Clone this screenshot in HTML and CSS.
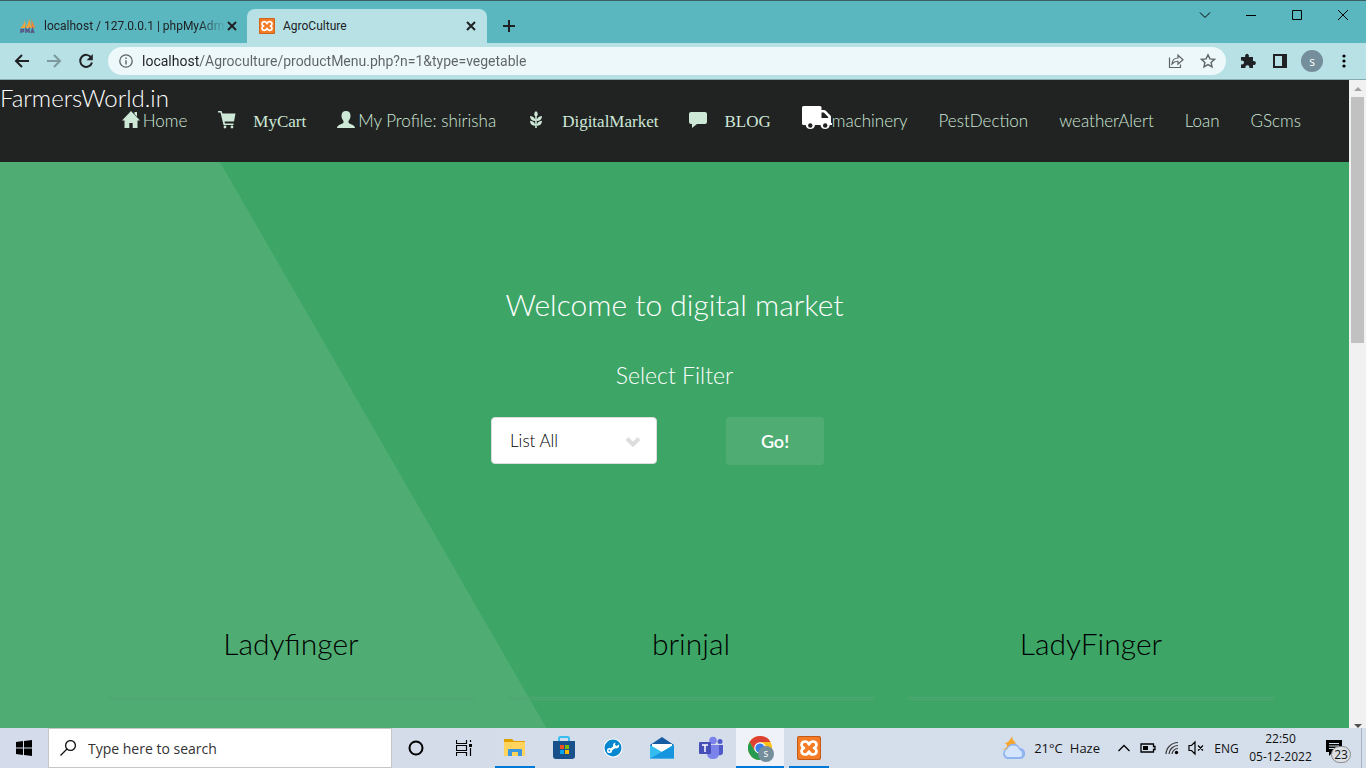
FILE: index.html
```html
<!DOCTYPE html>
<html lang="en">
<head>
  <meta charset="utf-8">
  <title>AgroCulture</title>
  <link rel="stylesheet" href="styles.css">
</head>
<body>
  <!-- browser tabs -->
  <div class="tabstrip">
    <div class="tab">
      <svg class="favicon" viewBox="0 0 16 16"><path d="M0 10Q4 7 5 2Q6 6 5 10zM5 10Q9 6 9 0Q11 6 11 10z" fill="#f0a43a"/><path d="M11 10Q12 6 11 1Q14 6 15 10z" fill="#e8873a"/><path d="M1 11v4M1 11.500h2.500v2H1M6 15v-4l1.500 2L9 11v4M11 15l1.500-4L14 15M11.500 14h2" fill="none" stroke="#555a86" stroke-width="1.500"/></svg>
      <span class="tab-title fade">localhost / 127.0.0.1 | phpMyAdm</span>
      <button class="tab-close" aria-label="Close tab"><svg viewBox="0 0 8 8"><path d="M0 0l8 8M8 0L0 8"/></svg></button>
    </div>
    <div class="tab active">
      <svg class="favicon" viewBox="0 0 24 24"><use href="#xampp"/></svg>
      <span class="tab-title">AgroCulture</span>
      <button class="tab-close" aria-label="Close tab"><svg viewBox="0 0 8 8"><path d="M0 0l8 8M8 0L0 8"/></svg></button>
    </div>
    <button class="new-tab" aria-label="New tab"><svg viewBox="0 0 12 12"><path d="M6 0v12M0 6h12"/></svg></button>
    <div class="window-buttons">
      <button aria-label="Search tabs"><svg viewBox="0 0 12 12"><path d="M1 3.500l5 5 5-5"/></svg></button>
      <button aria-label="Minimize"><svg viewBox="0 0 12 12"><path d="M1 6.500h10"/></svg></button>
      <button aria-label="Maximize"><svg viewBox="0 0 12 12"><path d="M1.500 1.500h9v9h-9z"/></svg></button>
      <button aria-label="Close"><svg viewBox="0 0 12 12"><path d="M1 1l10 10M11 1L1 11"/></svg></button>
    </div>
  </div>

  <!-- address bar -->
  <div class="toolbar">
    <button class="tool" aria-label="Back"><svg viewBox="0 0 16 16"><path d="M15 8H2M8 2L2 8l6 6" fill="none" stroke="#202124" stroke-width="2"/></svg></button>
    <button class="tool" aria-label="Forward"><svg viewBox="0 0 16 16"><path d="M1 8h13M8 2l6 6-6 6" fill="none" stroke="#7d999d" stroke-width="2"/></svg></button>
    <button class="tool" aria-label="Reload"><svg viewBox="0 0 16 16"><path d="M13.200 4.500A6 6 0 1 0 14 9.500" fill="none" stroke="#202124" stroke-width="2"/><path d="M14.800 1v6.200H8.600z" fill="#202124"/></svg></button>
    <div class="omnibox">
      <svg class="info" viewBox="0 0 14 14"><circle cx="7" cy="7" r="6.200" fill="none" stroke="#5f6368" stroke-width="1.300"/><path d="M6.300 6.200h1.400v4.300H6.300zM6.300 3.500h1.400v1.500H6.300z" fill="#5f6368"/></svg>
      <input class="url" type="text" aria-label="Address" value="localhost/Agroculture/productMenu.php?n=1&amp;type=vegetable">
      <button class="tool" aria-label="Share"><svg viewBox="0 0 16 16"><path d="M1.500 4.500v10h11v-3M4 11q.5-6 6-6V2.200l5 4.500-5 4.500V8.300Q6.500 8 4 11z" fill="none" stroke="#5f6368" stroke-width="1.200"/></svg></button>
      <button class="tool" aria-label="Bookmark"><svg viewBox="0 0 16 16"><path d="M8 1.800l1.900 4.100 4.500.5-3.300 3 .9 4.400L8 11.600l-4 2.200.9-4.400-3.300-3 4.500-.5z" fill="none" stroke="#5f6368" stroke-width="1.400"/></svg></button>
    </div>
    <button class="tool" aria-label="Extensions"><svg viewBox="0 0 16 16"><path d="M1 4h4.300a2 2 0 1 1 3.400 0H13v4.200a2 2 0 1 1 0 3.600V15H9.200a2 2 0 1 0-3.600 0H1v-3.800a2 2 0 1 0 0-3.400z" fill="#202124"/></svg></button>
    <button class="tool" aria-label="Side panel"><svg viewBox="0 0 16 16"><path d="M1 1h14v14H1zM3 3v10h7V3z" fill="#202124" fill-rule="evenodd"/></svg></button>
    <button class="avatar" aria-label="Profile">s</button>
    <button class="tool" aria-label="Menu"><svg viewBox="0 0 16 16"><circle cx="8" cy="3" r="1.600"/><circle cx="8" cy="8" r="1.600"/><circle cx="8" cy="13" r="1.600"/></svg></button>
  </div>

  <div class="viewport">
    <div class="page">
      <header class="header">
        <h1 class="logo"><a href="#">FarmersWorld.in</a></h1>
        <nav class="nav">
          <a href="#"><svg class="glyph" viewBox="0 0 18 18"><path d="M9 0l9 9.400h-2.500V17h-4.800v-5H7.300v5H2.500V9.400H0zM12.500 1H15v4.500l-2.500-2.500z"/></svg><span class="near">Home</span></a>
          <a href="#"><svg class="glyph" viewBox="0 0 18 18"><path d="M0 0h3.500l1 2.500H17.500L16 10.500H6.500l.5 2h8.500V14H5.500L2.500 1.500H0z"/><circle cx="7" cy="16" r="1.400"/><circle cx="14" cy="16" r="1.400"/></svg><span class="serif">MyCart</span></a>
          <a href="#"><svg class="glyph" viewBox="0 0 18 18"><path d="M9 0c3 0 4.500 2 4.500 4.800 0 2.500-1 4-2 5.200v1.500c0 1.500 6.500 2 6.500 5.500H0c0-3.500 6.500-4 6.500-5.500V10c-1-1.200-2-2.700-2-5.200C4.500 2 6 0 9 0z"/></svg><span class="near">My Profile: shirisha</span></a>
          <a href="#"><svg class="glyph" viewBox="0 0 18 18"><path d="M9 0q3.600 3.200 0 6.400q-3.600-3.200 0-6.400zM8.200 6h1.600v11H8.200zM8.500 10Q3 10 3 5q5 .5 5.500 5zM9.500 10q5.500 0 5.500-5-5 .5-5.500 5zM8.500 14.800Q3 14.800 3 9.800q5 .5 5.500 5zM9.500 14.800q5.500 0 5.500-5-5 .5-5.500 5z"/></svg><span class="serif">DigitalMarket</span></a>
          <a href="#"><svg class="glyph" viewBox="0 0 18 18"><path d="M2 1h14q2 0 2 2v8q0 2-2 2H8l-5 4V13H2q-2 0-2-2V3q0-2 2-2z"/></svg><span class="serif">BLOG</span></a>
          <a href="#"><svg class="truck" viewBox="0 0 30 24"><path d="M1.500 0H18q1.500 0 1.500 1.500V4H22q1 0 1.800.8l4.400 4.400q.8.800.8 1.800v6h1v2h-2.200a4.700 4.700 0 0 1-9.300 0H13a4.700 4.700 0 0 1-9.300 0H1.500Q0 19 0 17.500v-16Q0 0 1.500 0z"/><path d="M19.500 6.500h2.300l4.400 4.400v1h-6.700z" fill="#212322"/><circle cx="8.300" cy="19.500" r="2.200" fill="#212322"/><circle cx="23.200" cy="19.500" r="2.200" fill="#212322"/></svg><span>machinery</span></a>
          <a href="#">PestDection</a>
          <a href="#">weatherAlert</a>
          <a href="#">Loan</a>
          <a href="#">GScms</a>
        </nav>
      </header>

      <main class="market">
        <h2>Welcome to digital market</h2>
        <h3><label for="filter">Select Filter</label></h3>
        <form class="filter">
          <div class="select-wrapper">
            <select id="filter">
              <option>List All</option>
              <option>Fruit</option>
              <option>Vegetable</option>
              <option>Grains</option>
            </select>
            <svg class="arrow" viewBox="0 0 16 11"><path d="M2 2.500l6 6 6-6"/></svg>
          </div>
          <button class="go" type="submit">Go!</button>
        </form>
        <div class="products">
          <section class="product">Ladyfinger</section>
          <section class="product">brinjal</section>
          <section class="product">LadyFinger</section>
        </div>
      </main>
    </div>
    <div class="scrollbar">
      <svg viewBox="0 0 8 4"><path d="M0 4l4-4 4 4z" fill="#a3a3a3"/></svg>
      <div class="thumb"></div>
      <svg class="down" viewBox="0 0 8 4"><path d="M0 0l4 4 4-4z" fill="#505050"/></svg>
    </div>
  </div>

  <!-- windows taskbar -->
  <footer class="taskbar">
    <button class="task start" aria-label="Start"><svg viewBox="0 0 16 16"><path d="M0 2l7-1v6.500H0zM8 .9L16 0v7.500H8zM0 8.500h7V15l-7-1zM8 8.500h8V16l-8-.9z"/></svg></button>
    <label class="search">
      <svg viewBox="0 0 16 16"><circle cx="10.500" cy="5.500" r="4.900"/><path d="M7 9l-6.500 6.500"/></svg>
      <input type="text" placeholder="Type here to search" aria-label="Search">
    </label>
    <button class="task" aria-label="Cortana"><svg viewBox="0 0 16 16"><circle cx="8" cy="8" r="6.500" fill="none" stroke="#000" stroke-width="2"/></svg></button>
    <button class="task" aria-label="Task view"><svg viewBox="0 0 16 16"><path d="M.5 0v3.500h10V0M.5 5.500h10v5H.5zM.5 16v-3.500h10V16M14.500 0v2M14.500 8v8" fill="none" stroke="#000" stroke-width="1.200"/><path d="M13 4h3v3h-3z"/></svg></button>
    <div class="apps">
      <button class="task running" aria-label="File Explorer"><svg viewBox="0 0 24 24"><path d="M1 3h8l2 2h11v6H1z" fill="#dfa000"/><path d="M1 6h21v14H1z" fill="#ffd35c"/><path d="M5 20v-6q0-1 1-1h12q1 0 1 1v6h-4v-4H9v4z" fill="#3b96dc"/></svg></button>
      <button class="task" aria-label="Store"><svg viewBox="0 0 24 24"><path d="M7 6V2.500Q7 1 8.500 1h7Q17 1 17 2.500V6" fill="none" stroke="#38bdf0" stroke-width="2"/><path d="M1 5h22v15q0 3-3 3H4q-3 0-3-3z" fill="#18508b"/><path d="M8 9h4v4H8z" fill="#f25022"/><path d="M13 9h4v4h-4z" fill="#7fba00"/><path d="M8 14h4v4H8z" fill="#00a4ef"/><path d="M13 14h4v4h-4z" fill="#ffb900"/></svg></button>
      <button class="task" aria-label="Support"><svg viewBox="0 0 24 24"><circle cx="12" cy="12" r="9.500" fill="#fff"/><circle cx="12" cy="12" r="8.500" fill="#0787cf"/><path d="M9 14.500l5-4" stroke="#fff" stroke-width="2.500"/><circle cx="8.500" cy="14.500" r="1.800" fill="none" stroke="#fff" stroke-width="1.500"/><path d="M18 8.500l-2.500 1.500-1.500-1 .5-2.500a3 3 0 1 0 3.500 2z" fill="#fff"/></svg></button>
      <button class="task" aria-label="Mail"><svg viewBox="0 0 24 24"><path d="M0 9l12-8 12 8v13H0z" fill="#155ca3"/><path d="M2 8h20v8H2z" fill="#fff"/><path d="M0 9l12 7L24 8.500V22.500H0z" fill="#35bdf1"/><path d="M0 22.500L24 9v13.500z" fill="#1795df"/></svg></button>
      <button class="task" aria-label="Teams"><svg viewBox="0 0 24 24"><circle cx="14" cy="4.500" r="3.800" fill="#7b83eb"/><circle cx="21" cy="5.500" r="2.500" fill="#5059c9"/><path d="M18 9h6v7q0 4-5 3z" fill="#5059c9"/><path d="M8 9h12v8q0 6-6 6t-6-6z" fill="#7b83eb"/><rect y="6" width="12" height="12" rx="1" fill="#464eb8"/><path d="M3 9h6M6 9v7" stroke="#fff" stroke-width="1.500"/></svg></button>
      <button class="task current" aria-label="Chrome"><svg viewBox="0 0 24 24"><circle cx="12" cy="12" r="12" fill="#fbc116"/><path d="M1.600 6A12 12 0 0 1 22.400 6H12L7 15z" fill="#de4033"/><path d="M1.600 6A12 12 0 0 0 12 24l5.200-9H6.800z" fill="#249b50"/><circle cx="12" cy="12" r="5.800" fill="#fff"/><circle cx="12" cy="12" r="4.600" fill="#3b7ded"/></svg><span class="badge">s</span></button>
      <button class="task running" aria-label="XAMPP"><svg viewBox="0 0 24 24"><use href="#xampp"/></svg></button>
    </div>
    <div class="tray">
      <button class="weather"><svg viewBox="0 0 26 24"><path d="M11 0q0 4 4 7l-8 7-6-1q5 0 5-3T2 7q6 1 9-7z" fill="#f8a62b"/><path d="M6 23a5.500 5.500 0 0 1 0-10.500 7 7 0 0 1 13-.5A5.600 5.600 0 0 1 20 23z" fill="#8fb4ef"/><path d="M6 21a4.500 4.500 0 0 1 .5-8 6.500 6.500 0 0 1 12 1 4 4 0 0 1 1 7z" fill="#d3e4fc"/></svg><span>21°C</span><span>Haze</span></button>
      <button aria-label="Show hidden icons"><svg viewBox="0 0 16 16"><path d="M2.500 11L8 5.500l5.500 5.500" fill="none" stroke="#000" stroke-width="1.300"/></svg></button>
      <button aria-label="Battery"><svg viewBox="0 0 16 16"><path d="M1 4h12.500v2.500H15v3h-1.500V12H1z" fill="none" stroke="#000" stroke-width="1.300"/><path d="M3 6h5v4H3z"/></svg></button>
      <button aria-label="Network"><svg viewBox="0 0 16 16"><path d="M2 14A12 12 0 0 1 14 2.500M5 14a9 9 0 0 1 9-8.500M8 14a6 6 0 0 1 6-5.500" fill="none" stroke="#333" stroke-width="1.200"/><circle cx="12.500" cy="12.500" r="1.700"/></svg></button>
      <button aria-label="Volume"><svg viewBox="0 0 16 16"><path d="M1 5.500h2.500L7 2v12l-3.500-3.500H1zM10 5.500l5 5M15 5.500l-5 5" fill="none" stroke="#000" stroke-width="1.200"/></svg></button>
      <button class="lang">ENG</button>
      <button class="clock"><span>22:50</span><span>05-12-2022</span></button>
      <button class="notify" aria-label="Notifications"><svg viewBox="0 0 16 16"><path d="M0 0h16v12H7l-4 4v-4H0z"/><path d="M3 3.500h10M3 6h10M3 8.500h7" stroke="#d5dfee"/></svg><span class="count">23</span></button>
    </div>
  </footer>

  <svg class="defs" aria-hidden="true">
    <symbol id="xampp" viewBox="0 0 24 24">
      <rect width="24" height="24" rx="2" fill="#c55a16"/>
      <rect x="1" y="1" width="22" height="22" rx="2" fill="#f47c27"/>
      <path d="M12 8.500Q11 5.500 8 5.500T4.500 8.500Q4.500 11 7 12Q4.500 13 4.500 15.500Q5 18.500 8 18.500T12 15.500Q13 18.500 16 18.500T19.500 15.500Q19.500 13 17 12Q19.500 11 19.500 8.500Q19 5.500 16 5.500T12 8.500z" fill="none" stroke="#fff" stroke-width="2.600" stroke-linejoin="round"/>
    </symbol>
  </svg>
</body>
</html>
```

FILE: styles.css
```css
* {
  box-sizing: border-box;
}

body {
  display: flex;
  flex-direction: column;
  height: 100vh;
  margin: 0;
  overflow: hidden;
  font-family: "Open Sans", "Noto Sans", sans-serif;
  font-size: 12px;
  color: #202124;
}

button {
  display: flex;
  align-items: center;
  justify-content: center;
  flex: none;
  padding: 0;
  border: none;
  background: none;
  font: inherit;
  color: inherit;
}

svg {
  display: block;
  flex: none;
}

a {
  color: inherit;
  text-decoration: none;
}

.defs {
  position: absolute;
  width: 0;
  height: 0;
}

/* Browser tabs */
.tabstrip {
  display: flex;
  flex: none;
  height: 43px;
  padding: 8px 0 0 8px;
  background: #5ab7c0;
  border-top: 1px solid #3c5f64;
}

.tab {
  display: flex;
  align-items: center;
  width: 239px;
  padding: 0 11px 0 12px;
}

.tab.active {
  width: 240px;
  padding-right: 12px;
  background: #b7e1e5;
  border-radius: 8px 8px 0 0;
}

.favicon {
  width: 16px;
  height: 16px;
  margin-right: 8px;
}

.tab-title {
  flex: 1;
  font-family: Roboto, sans-serif;
  white-space: nowrap;
}

.fade {
  -webkit-mask-image: linear-gradient(to right, #000 85%, transparent);
  mask-image: linear-gradient(to right, #000 85%, transparent);
}

.tab-close {
  width: 8px;
  margin-left: 2px;
}

.tab-close svg {
  width: 8px;
  height: 8px;
  overflow: visible;
  stroke: #202124;
  stroke-width: 2;
}

.new-tab {
  width: 44px;
}

.new-tab svg {
  width: 12px;
  height: 12px;
  stroke: #202124;
  stroke-width: 2;
}

.window-buttons {
  display: flex;
  height: 12px;
  margin-left: auto;
}

.window-buttons button {
  width: 46px;
}

.window-buttons svg {
  width: 12px;
  height: 12px;
  fill: none;
  stroke: #000;
}

/* Address bar */
.toolbar {
  display: flex;
  align-items: center;
  flex: none;
  height: 37px;
  padding: 0 6px;
  background: #b7e1e5;
  border-bottom: 1px solid #88abaf;
}

.tool {
  width: 32px;
  height: 28px;
}

.tool svg {
  width: 16px;
  height: 16px;
}

.omnibox {
  display: flex;
  align-items: center;
  flex: 1;
  height: 28px;
  margin: 0 6px;
  padding: 0 2px 0 11px;
  border-radius: 14px;
  background: #ecf8f9;
}

.info {
  width: 14px;
  height: 14px;
  margin-right: 9px;
}

/* host is dark, the path after it is grey */
.url {
  flex: 1;
  padding: 0;
  border: none;
  background: linear-gradient(to right, #202124 58px, #5f6368 58px);
  -webkit-background-clip: text;
  background-clip: text;
  color: transparent;
  font: 14px Roboto, sans-serif;
}

.avatar {
  width: 22px;
  height: 22px;
  margin: 0 5px;
  border-radius: 50%;
  background: #758e9b;
  color: #fff;
}

/* Page */
.viewport {
  display: flex;
  flex: 1;
  min-height: 0;
}

.page {
  display: flex;
  flex-direction: column;
  flex: 1;
  overflow: hidden;
  font-family: Lato, sans-serif;
  font-weight: 300;
}

.header {
  position: relative;
  flex: none;
  height: 82px;
  background: #212322;
  color: #fff;
}

.logo {
  position: absolute;
  top: 0;
  left: 0;
  margin: 0;
  font-size: 24px;
  font-weight: 300;
  line-height: 35px;
}

.nav {
  display: flex;
  align-items: center;
  justify-content: flex-end;
  gap: 31px;
  height: 80px;
  padding-right: 48px;
  color: #cee8d8;
  font-size: 17px;
  white-space: nowrap;
}

.nav a {
  display: flex;
  align-items: center;
}

.glyph {
  width: 18px;
  height: 18px;
  fill: #cee8d8;
}

.near {
  margin-left: 3px;
}

.serif {
  margin: 4px 0 0 17px;
  font-family: "Liberation Serif", serif;
  font-weight: 400;
}

.truck {
  width: 30px;
  height: 24px;
  margin-bottom: 4px;
  fill: #fff;
}

.market {
  position: relative;
  flex: 1;
  padding-top: 119px;
  background: #3da667;
  color: #fff;
  text-align: center;
}

.market::before { /* lighter slanted panel */
  content: '';
  position: absolute;
  top: 0;
  left: 0;
  right: 0;
  bottom: 0;
  background: #4fad74;
  clip-path: polygon(0 0, 16.300% 0, 40.500% 100%, 0 100%);
}

.market > * {
  position: relative;
}

.market h2 {
  margin: 0 0 31px;
  font-size: 30px;
  font-weight: 300;
  line-height: 46px;
}

.market h3 {
  margin: 0 0 25px;
  font-size: 23px;
  font-weight: 300;
  line-height: 34px;
}

.filter {
  display: flex;
  justify-content: center;
  gap: 69px;
  height: 49px;
  padding-right: 34px;
}

.select-wrapper {
  position: relative;
  width: 166px;
  height: 47px;
}

.filter select {
  width: 100%;
  height: 100%;
  padding: 0 18px;
  appearance: none;
  border: 1px solid #dddddd;
  border-radius: 4px;
  background: #fff;
  color: #000;
  font: 300 17px Lato, sans-serif;
}

.arrow {
  position: absolute;
  top: 19px;
  right: 16px;
  width: 16px;
  height: 11px;
  fill: none;
  stroke: #dddddd;
  stroke-width: 4;
}

.go {
  width: 98px;
  height: 48px;
  border-radius: 4px;
  background: #4fad74;
  font-size: 18px;
  font-weight: 600;
}

.products {
  display: grid;
  grid-template-columns: repeat(3, 1fr);
  gap: 34px;
  margin: 154px 75px 0 108px;
}

.product {
  height: 80px;
  border-bottom: 3px double #50a672;
  color: #000;
  font-size: 30px;
  font-weight: 300;
  line-height: 46px;
}

.scrollbar {
  display: flex;
  flex-direction: column;
  align-items: center;
  width: 17px;
  padding-top: 7px;
  background: #f1f1f1;
}

.scrollbar svg {
  width: 8px;
  height: 4px;
}

.thumb {
  width: 13px;
  height: 246px;
  margin-top: 6px;
  background: #c1c1c1;
}

.scrollbar .down {
  margin-top: auto;
}

/* Taskbar */
.taskbar {
  display: flex;
  flex: none;
  height: 40px;
  background: linear-gradient(to right, #d4dbea, #d5dfeb);
  color: #111;
}

.task {
  position: relative;
  width: 48px;
  height: 40px;
}

.task svg {
  width: 16px;
  height: 16px;
}

.search {
  display: flex;
  align-items: center;
  width: 344px;
  padding: 0 11px;
  border: 1px solid #c6c6c6;
  background: #fff;
}

.search svg {
  width: 16px;
  height: 16px;
  margin-right: 12px;
  fill: none;
  stroke: #111;
  stroke-width: 1.3;
}

.search input {
  flex: 1;
  min-width: 0;
  padding: 0;
  border: none;
  font: 14px "Open Sans", "Noto Sans", sans-serif;
}

.search input::placeholder {
  color: #333;
}

.apps {
  display: flex;
  gap: 1px;
  margin-left: 3px;
}

.apps svg {
  width: 24px;
  height: 24px;
}

.running::after,
.current::after {
  content: '';
  position: absolute;
  right: 4px;
  bottom: 0;
  left: 4px;
  height: 2px;
  background: #0078d7;
}

.current {
  background: #eff2f8;
}

.current::after {
  right: 0;
  left: 0;
}

.badge {
  position: absolute;
  right: 10px;
  bottom: 6px;
  width: 16px;
  height: 16px;
  border-radius: 50%;
  background: #758e9b;
  color: #fff;
  font-size: 10px;
  line-height: 14px;
}

.tray {
  display: flex;
  margin: 0 4px 0 auto;
  padding-right: 9px;
  border-right: 1px solid #a9b3c0;
}

.tray button {
  position: relative;
  width: 24px;
}

.tray svg {
  width: 16px;
  height: 16px;
}

.tray .weather {
  gap: 7px;
  width: auto;
  margin-right: 12px;
  font-size: 13px;
}

.tray .weather svg {
  width: 26px;
  height: 24px;
}

.tray .lang {
  width: 37px;
}

.tray .clock {
  flex-direction: column;
  width: 71px;
  line-height: 18px;
}

.tray .notify {
  width: 36px;
}

.count {
  position: absolute;
  right: 1px;
  bottom: 5px;
  width: 20px;
  height: 17px;
  border: 1px solid #888;
  border-radius: 9px;
  background: #dcdfe4;
  line-height: 15px;
}
```
